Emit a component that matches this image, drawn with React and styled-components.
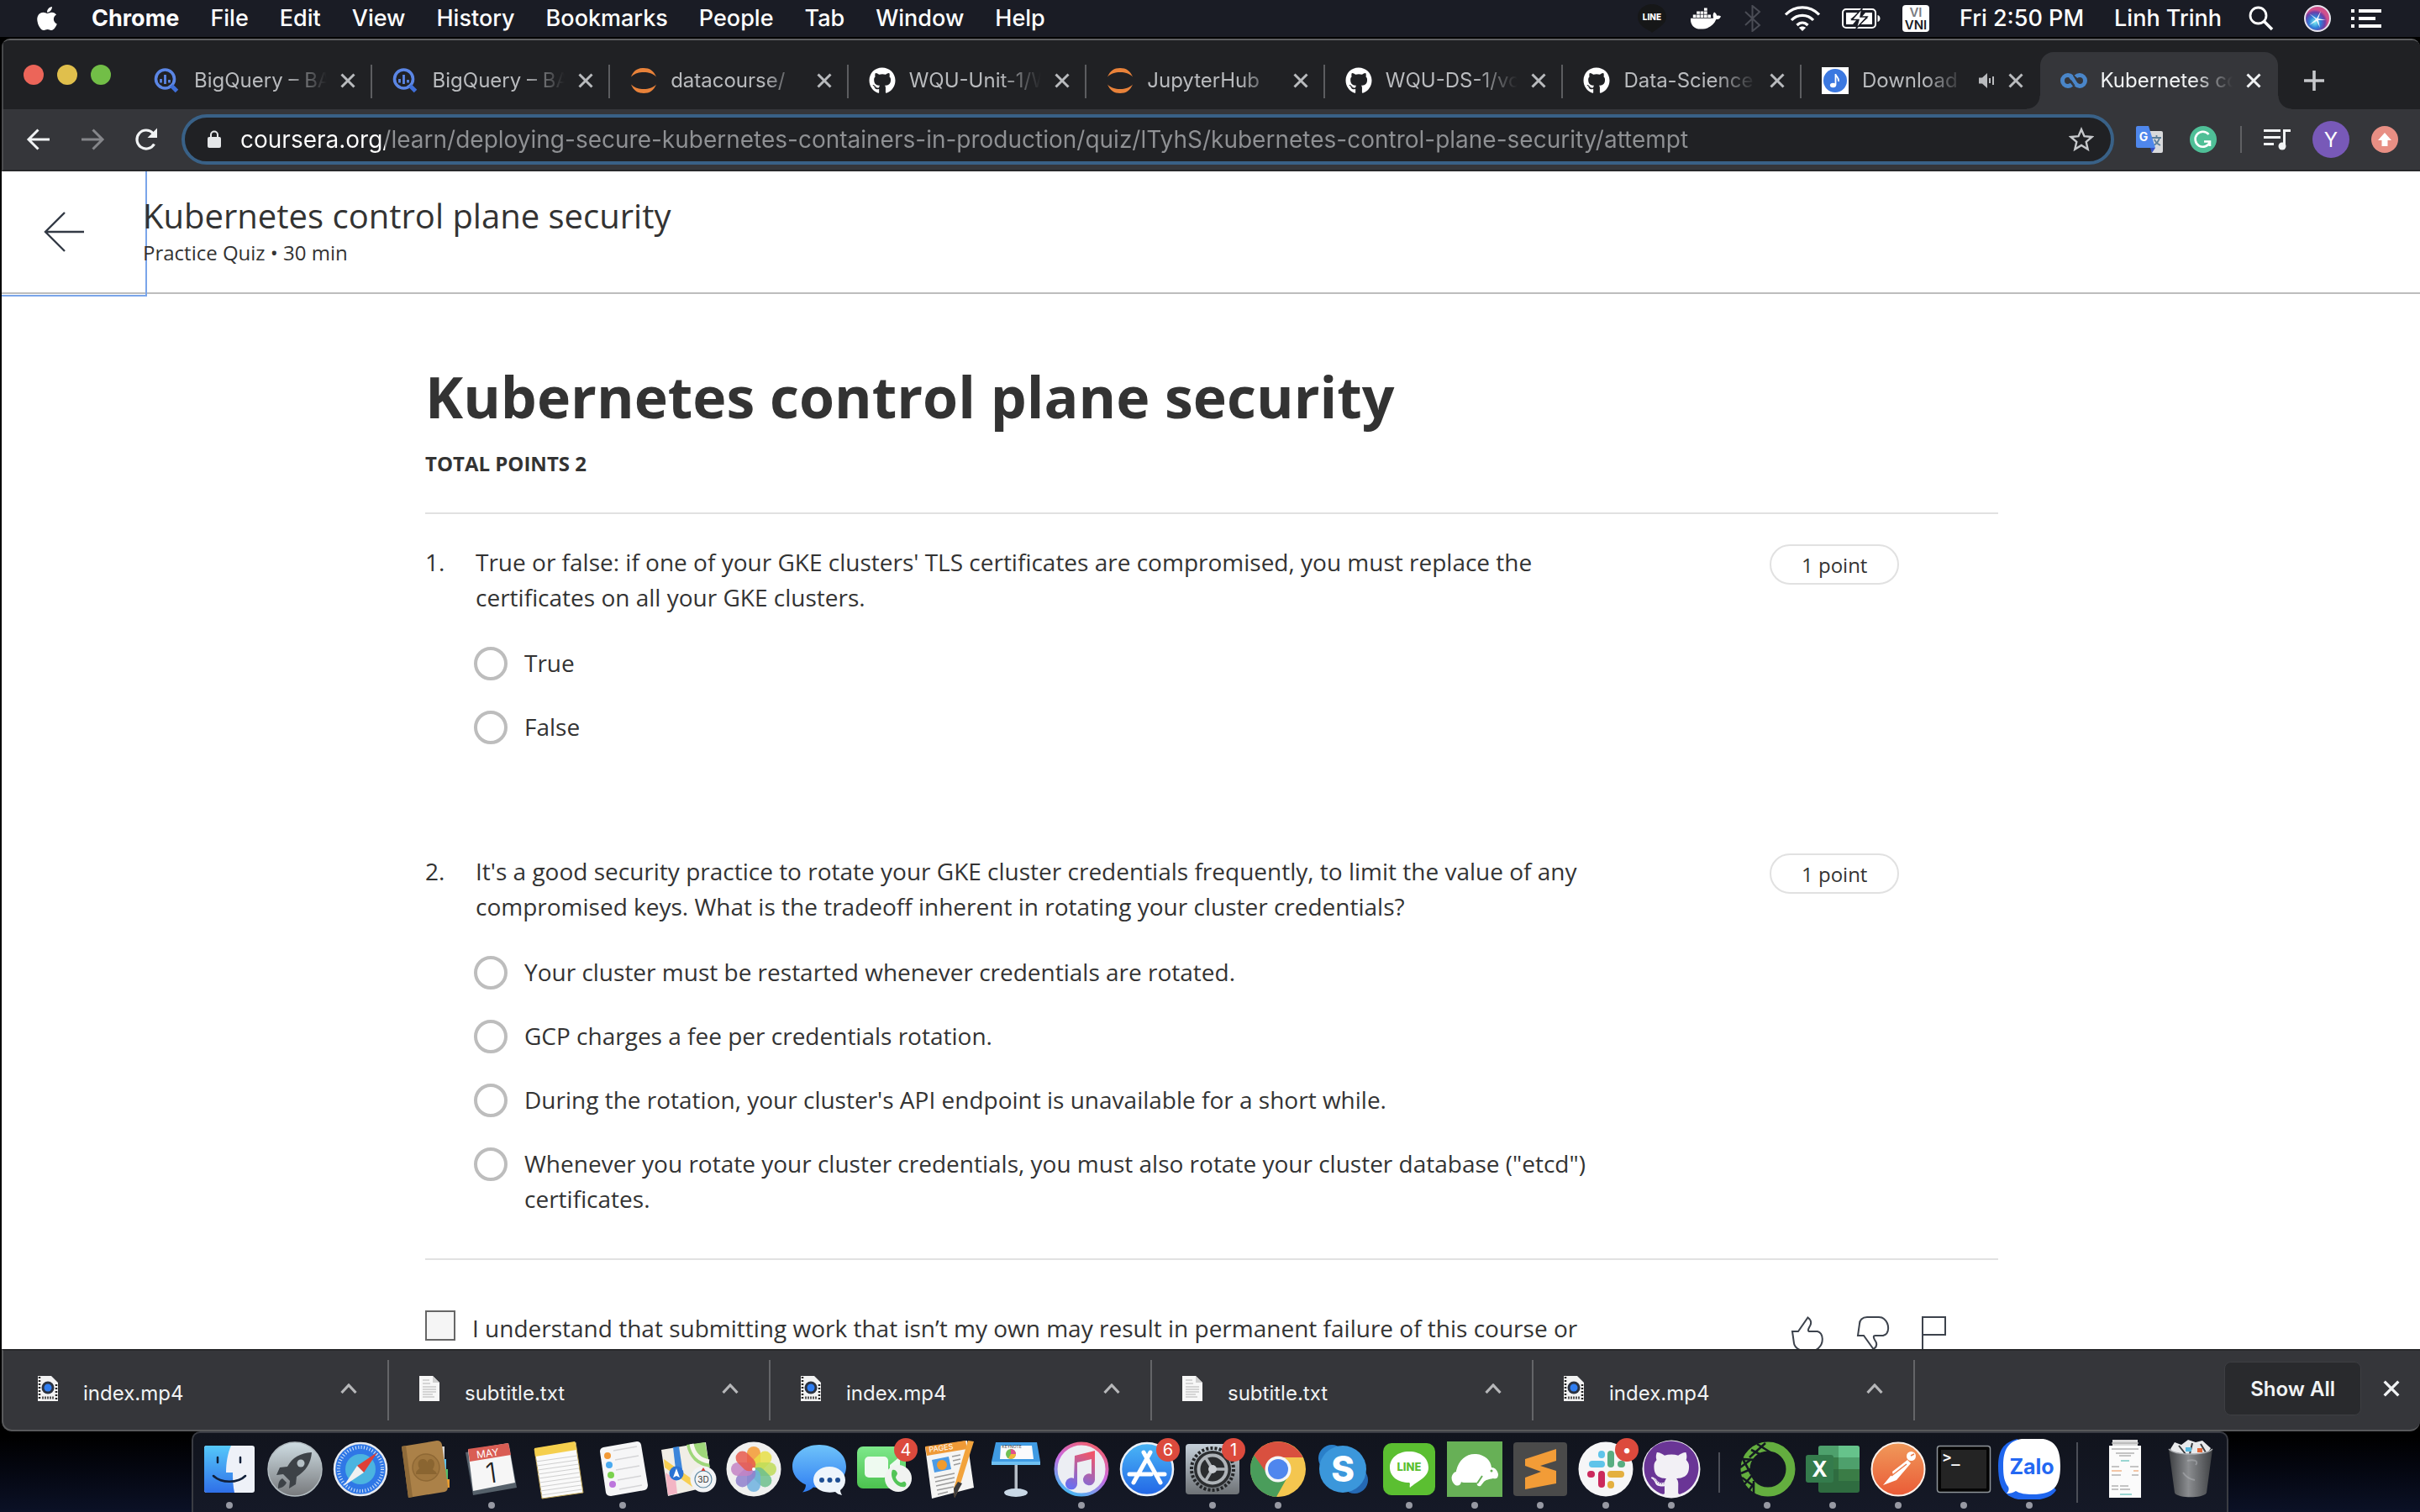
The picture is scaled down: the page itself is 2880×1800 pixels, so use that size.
import React from "react";
import styled, { createGlobalStyle, css } from "styled-components";
import { FaApple, FaDocker, FaGithub } from "react-icons/fa";

const UI = `Inter, Roboto, "Liberation Sans", sans-serif`;
const READING = `"Open Sans", "Noto Sans", sans-serif`;

const GlobalStyle = createGlobalStyle`
  *, *::before, *::after { box-sizing: border-box; }
  body { margin: 0; background: #05070f; overflow: hidden; }
  button { font: inherit; color: inherit; background: none; border: 0; padding: 0; margin: 0; cursor: pointer; }
  svg { display: block; flex: none; }
  h1, h2, p, ol, ul, li { margin: 0; padding: 0; list-style: none; }
`;

/* ---------- desktop ---------- */

const Desktop = styled.div`
  display: flex;
  flex-direction: column;
  height: 100vh;
  background: linear-gradient(#000 0 95%, #04060f 97%, #0b1126 100%);
  font-family: ${UI};
`;

const MenuBar = styled.header`
  display: flex;
  align-items: center;
  justify-content: space-between;
  height: 44px;
  flex: none;
  padding: 0 46px 0 40px;
  background: #1a1c25;
  color: #fff;
  font-size: 27px;
`;

const MenuGroup = styled.nav`
  display: flex;
  align-items: center;
  gap: 37px;
`;

const MenuButton = styled.button`
  font-weight: ${(p) => (p.$bold ? 700 : 500)};
  line-height: 44px;
  white-space: nowrap;
`;

const StatusGroup = styled.div`
  display: flex;
  align-items: center;
  gap: ${(p) => p.$gap}px;
`;

const InputSource = styled.span`
  display: grid;
  width: 32px;
  height: 32px;
  border-radius: 4px;
  background: #fff;
  color: #1a1c25;
  font-size: 15px;
  font-weight: 600;
  line-height: 15px;
  text-align: center;
  align-content: center;
`;

const Faded = styled.span`
  color: #7b7c82;
`;

/* ---------- browser window ---------- */

const Window = styled.main`
  display: flex;
  flex-direction: column;
  flex: 1;
  min-height: 0;
  margin: 2px 0 0 2px;
  border-top: 2px solid #5d5e60;
  border-radius: 10px 10px 12px 12px;
  overflow: hidden;
  background: #202124;
`;

const TabStrip = styled.div`
  display: flex;
  align-items: flex-end;
  height: 82px;
  flex: none;
  border-left: 2px solid #47484a;
  background: #202124;
`;

const TrafficLights = styled.div`
  display: flex;
  gap: 16px;
  padding: 0 27px 29px 24px;
`;

const Light = styled.button`
  width: 24px;
  height: 24px;
  border-radius: 50%;
  background: ${(p) => p.$color};
`;

const TabList = styled.div`
  display: flex;
  flex: 0 1 2552px;
  min-width: 0;
`;

const TabBox = styled.div`
  position: relative;
  display: flex;
  align-items: center;
  gap: 16px;
  flex: 1 1 0;
  min-width: 0;
  height: 68px;
  padding: 0 20px 0 24px;
  color: ${(p) => (p.$active ? "#f1f3f4" : "#b9bbbe")};
  ${(p) =>
    p.$active
      ? css`
          background: #35363a;
          border-radius: 16px 16px 0 0;
          &::before,
          &::after {
            content: "";
            position: absolute;
            bottom: 0;
            width: 16px;
            height: 16px;
          }
          &::before {
            right: 100%;
            background: radial-gradient(circle at 0 0, #202124 15px, #35363a 16px);
          }
          &::after {
            left: 100%;
            background: radial-gradient(circle at 100% 0, #202124 15px, #35363a 16px);
          }
        `
      : ""}
  ${(p) =>
    p.$divided
      ? css`
          background: linear-gradient(#5c5d60, #5c5d60) right 0 top 15px / 2px 40px no-repeat;
        `
      : ""}
`;

const TabTitle = styled.button`
  flex: 1;
  min-width: 0;
  overflow: hidden;
  white-space: nowrap;
  text-align: left;
  font-size: 24px;
  line-height: 32px;
  mask-image: linear-gradient(90deg, #000 calc(100% - 48px), transparent);
`;

const IconButton = styled.button`
  display: grid;
  place-items: center;
  flex: none;
  width: ${(p) => p.$w}px;
  height: ${(p) => p.$w}px;
`;

const NewTab = styled.button`
  display: grid;
  place-items: center;
  width: 86px;
  height: 68px;
  color: #c6c8cb;
`;

const Toolbar = styled.div`
  display: flex;
  align-items: center;
  height: 74px;
  flex: none;
  border-left: 2px solid #4b4c4f;
  border-bottom: 2px solid #28292b;
  background: #35363a;
  padding-right: 26px;
`;

const NavButtons = styled.div`
  display: flex;
  gap: 32px;
  padding: 0 26px;
`;

const Omnibox = styled.label`
  display: flex;
  align-items: center;
  flex: 1;
  height: 60px;
  padding: 0 20px 0 26px;
  border: 4px solid #396187;
  border-radius: 30px;
  background: #202124;
`;

const Address = styled.input`
  flex: 1;
  min-width: 0;
  height: 44px;
  margin-left: 22px;
  padding: 0;
  border: 0;
  outline: 0;
  font-family: ${UI};
  font-size: 28px;
  color: transparent;
  background: linear-gradient(90deg, #fff 172px, #8f9194 172px);
  -webkit-background-clip: text;
  background-clip: text;
`;

const Extensions = styled.div`
  display: flex;
  align-items: center;
  gap: ${(p) => p.$gap}px;
  padding-left: ${(p) => p.$lead}px;
`;

const Rule = styled.span`
  width: 2px;
  height: 32px;
  background: #5f6063;
`;

const Avatar = styled.button`
  width: 44px;
  height: 44px;
  border-radius: 50%;
  background: #7859b8;
  color: #fff;
  font-size: 24px;
`;

/* ---------- page ---------- */

const Viewport = styled.div`
  flex: 1;
  min-height: 0;
  overflow: hidden;
  background: #fff;
  color: #333;
  font-family: ${READING};
`;

const PageHeader = styled.div`
  display: flex;
  height: 146px;
  align-items: center;
  border-bottom: 2px solid #bdbdbd;
`;

const BackButton = styled.button`
  display: grid;
  place-items: center start;
  padding-left: 50px;
  width: 168px;
  height: 144px;
  outline: 2px solid #7aa5ea;
  outline-offset: 3px;
`;

const HeaderText = styled.div`
  padding-bottom: 2px;
`;

const HeaderTitle = styled.p`
  font-size: 40px;
  line-height: 52px;
`;

const HeaderMeta = styled.p`
  font-size: 24px;
  line-height: 36px;
`;

const PageBody = styled.div`
  padding-left: 2px;
`;

const Quiz = styled.article`
  max-width: 1872px;
  margin: 0 auto;
  padding-top: 78px;
`;

const Title = styled.h1`
  font-size: 68px;
  font-weight: 700;
  line-height: 88px;
`;

const Points = styled.p`
  margin-top: 18px;
  padding-bottom: 40px;
  border-bottom: 2px solid #e1e1e1;
  font-size: 24px;
  font-weight: 700;
  line-height: 36px;
`;

const Questions = styled.ol`
  display: flex;
  flex-direction: column;
  gap: 130px;
  padding: 36px 0 50px;
  border-bottom: 2px solid #e1e1e1;
  font-size: 28px;
  line-height: 42px;
`;

const Question = styled.li`
  display: grid;
  grid-template-columns: 60px minmax(0, 1fr) 272px;
  align-items: start;
`;

const QuestionBody = styled.fieldset`
  border: 0;
  margin: 0;
  padding: 0 200px 0 0;
  min-width: 0;
`;

const Prompt = styled.legend`
  padding: 0;
  margin-bottom: 36px;
`;

const Options = styled.div`
  display: flex;
  flex-direction: column;
  gap: 34px;
  margin-left: -2px;
`;

const Option = styled.label`
  display: flex;
  align-items: flex-start;
  gap: 20px;
`;

const Radio = styled.input`
  appearance: none;
  flex: none;
  width: 40px;
  height: 40px;
  margin: 2px 0 0;
  border: 4px solid #bdbdbd;
  border-radius: 50%;
  background: #fff;
  &:checked {
    background: #2a73cc;
  }
`;

const Pill = styled.span`
  justify-self: start;
  padding: 2px 36px 0;
  border: 2px solid #e1e1e1;
  border-radius: 24px;
  font-size: 24px;
  line-height: 42px;
`;

const Honor = styled.div`
  display: grid;
  grid-template-columns: minmax(0, 1fr) 247px;
  padding-top: 60px;
  font-size: 28px;
  line-height: 42px;
`;

const Agreement = styled.label`
  display: flex;
  gap: 20px;
`;

const Checkbox = styled.input`
  appearance: none;
  flex: none;
  width: 36px;
  height: 36px;
  margin: 0;
  border: 2px solid #666;
  background: #f5f5f5;
  &:checked {
    background: #2a73cc;
  }
`;

const Feedback = styled.div`
  display: flex;
  gap: 38px;
  padding-top: 7px;
  color: #3d434d;
`;

/* ---------- downloads shelf ---------- */

const Shelf = styled.footer`
  display: flex;
  align-items: center;
  height: 98px;
  flex: none;
  padding: 0 24px 0 5px;
  border: 2px solid #58595b;
  border-top-color: #28292b;
  border-right: 0;
  border-radius: 0 0 12px 12px;
  background: #35363a;
  color: #f1f3f4;
  font-size: 24px;
`;

const Download = styled.div`
  display: flex;
  align-items: center;
  flex: 0 1 454px;
  height: 72px;
  padding: 0 36px 4px 36px;
  border-right: 2px solid #646568;
`;

const FileName = styled.button`
  flex: 1;
  min-width: 0;
  padding: 12px 0 0 30px;
  text-align: left;
  line-height: 32px;
`;

const ShelfActions = styled.div`
  display: flex;
  align-items: center;
  gap: 26px;
  margin-left: auto;
  padding-bottom: 4px;
`;

const ShowAll = styled.button`
  height: 64px;
  padding: 0 30px;
  border: 1px solid #3e3f43;
  border-radius: 8px;
  background: #292a2d;
  font-weight: 600;
`;

/* ---------- dock ---------- */

const Dock = styled.nav`
  display: flex;
  align-self: center;
  height: 96px;
  flex: none;
  padding: 0 4px;
  border: 2px solid #3a3c43;
  border-bottom: 0;
  border-radius: 10px 10px 0 0;
  background: linear-gradient(#11141d, #151927);
`;

const Slot = styled.button`
  position: relative;
  display: flex;
  flex-direction: column;
  align-items: center;
  gap: 3px;
  width: 78px;
  padding-top: 7px;
`;

const Running = styled.span`
  width: 8px;
  height: 8px;
  border-radius: 50%;
  background: #9799a3;
`;

const Badge = styled.span`
  position: absolute;
  top: 6px;
  right: 0;
  width: 28px;
  height: 28px;
  border-radius: 50%;
  background: #dc4a3d;
  color: #fff;
  font-size: 20px;
  line-height: 28px;
`;

const DockRule = styled.span`
  width: 2px;
  height: ${(p) => p.$h}px;
  margin: 0 17px;
  align-self: center;
  background: #4b4e57;
`;

/* ---------- small drawings ---------- */

const Svg = ({ w, h = w, box, children, ...rest }) => (
  <svg width={w} height={h} viewBox={box || `0 0 ${w} ${h}`} fill="none" aria-hidden="true" {...rest}>
    {children}
  </svg>
);

const Cross = ({ size = 18, stroke = 3 }) => (
  <Svg w={size} box="0 0 18 18" stroke="currentColor" strokeWidth={stroke}>
    <path d="M1.5 1.5l15 15M16.5 1.5l-15 15" />
  </Svg>
);

const BigQueryIcon = () => (
  <Svg w={32}>
    <circle cx="13.500" cy="14" r="11" stroke="#5b86e5" strokeWidth="3.600" />
    <path d="M21 22l6.500 6.500" stroke="#3f6fd8" strokeWidth="5" />
    <path d="M8.500 14v4.500M13.500 9v11M18.500 15v3.500" stroke="#5b86e5" strokeWidth="2.800" />
  </Svg>
);

const JupyterIcon = () => (
  <Svg w={32}>
    <path d="M1 11.500C4 4 9 1 16 1s12 3 15 10.500C27 7.500 22 6 16 6S5 7.500 1 11.500z" fill="#e8823a" />
    <path d="M1 20.500C4 28 9 31 16 31s12-3 15-10.500C27 24.500 22 26 16 26S5 24.500 1 20.500z" fill="#e8823a" />
  </Svg>
);

const GithubIcon = () => <FaGithub size={32} color="#fff" />;

const MusicIcon = () => (
  <Svg w={32}>
    <path d="M0 0h32v32H0z" fill="#fff" />
    <circle cx="16" cy="16" r="14" fill="#3b78e0" />
    <ellipse cx="13.500" cy="21.500" rx="3.600" ry="2.800" fill="#fff" />
    <path d="M16.500 21.500V8c.5 4 4.500 4 3.500 9" stroke="#fff" strokeWidth="1.800" />
  </Svg>
);

const CourseraIcon = () => (
  <Svg w={32} stroke="#4a86c9" strokeWidth="5">
    <path d="M13.500 20.800C12 22 10.500 22.500 9 22.500a6.500 6.500 0 010-13c2 0 3.500.8 4.600 2" />
    <path d="M18.400 11.400c1.100-1.200 2.700-1.900 4.600-1.900a6.500 6.500 0 010 13c-6.500 0-7-9.500-11.500-12" />
    <path d="M12.500 15.500l4.500 6.500" stroke="#35363a" strokeWidth="1.200" />
  </Svg>
);

const Speaker = () => (
  <Svg w={20}>
    <path d="M1 6.500h4L11 1v18l-6-5.500H1z" fill="currentColor" />
    <path d="M14 7v6M18 5v10" stroke="currentColor" strokeWidth="2" />
  </Svg>
);

const LineStatus = () => (
  <Svg w={36}>
    <path d="M18 1c10 0 17 7 17 15 0 9-8 12-17 19-1-3-17-6-17-19C1 8 8 1 18 1z" fill="#161718" />
    <text x="18" y="20" fontFamily={UI} fontWeight="800" fontSize="10" textAnchor="middle" fill="#fff">
      LINE
    </text>
  </Svg>
);

const Bluetooth = () => (
  <Svg w={20} h={32} stroke="#4a4c55" strokeWidth="2">
    <path d="M1 8l17 16-8.500 7V1L18 8 1 24" />
  </Svg>
);

const Wifi = () => (
  <Svg w={42} h={30} stroke="#fff" strokeWidth="3.200">
    <path d="M1 10.500C12-1 30-1 41 10.500M8 17c7-7.500 19-7.500 26 0M14.500 23c4-4 9-4 13 0" />
    <path d="M21 30l-4-4c2-2 6-2 8 0z" fill="#fff" stroke="none" />
  </Svg>
);

const Battery = () => (
  <Svg w={46} h={26}>
    <rect x="1" y="2" width="39" height="22" rx="4" stroke="#fff" strokeWidth="2" />
    <path d="M42.500 9c4 1 4 7 0 8z" fill="#fff" />
    <path d="M5 6h15L10 14h8l-5 6H5zM36 20H22l9-8h-8l5-6h8z" fill="#fff" />
    <path d="M24 1L12 14.500h8L17 25l13-14h-8z" fill="#fff" stroke="#1a1c25" strokeWidth="1.500" />
  </Svg>
);

const Spotlight = () => (
  <Svg w={30} stroke="#fff" strokeWidth="2.800">
    <circle cx="11.500" cy="11.500" r="9.500" />
    <path d="M18.500 18.500L28 28" strokeWidth="3.500" />
  </Svg>
);

const Siri = () => (
  <Svg w={32}>
    <defs>
      <radialGradient id="siri" cx="40%" cy="65%">
        <stop offset="0" stopColor="#7df0f0" />
        <stop offset=".45" stopColor="#2f7fd8" />
        <stop offset=".8" stopColor="#6b3fa8" />
        <stop offset="1" stopColor="#d0508c" />
      </radialGradient>
    </defs>
    <circle cx="16" cy="16" r="15" fill="url(#siri)" stroke="#e6e4ee" strokeWidth="2" />
    <path d="M6 10l9 6 5-9-3 9 9 2-9 0 2 9-4-8-9 5 8-7z" fill="#fff" opacity=".9" />
  </Svg>
);

const ListIcon = () => (
  <Svg w={36} h={22} stroke="#fff" strokeWidth="4">
    <path d="M0 2h4M9 2h27M0 11h4M9 11h20M0 20h4M9 20h27" />
  </Svg>
);

const Arrow = ({ flip, color }) => (
  <Svg w={32} stroke={color} strokeWidth="3">
    <g transform={flip ? "matrix(-1 0 0 1 32 0)" : undefined}>
      <path d="M29 16H4M15.500 4.500L4 16l11.500 11.500" />
    </g>
  </Svg>
);

const Reload = () => (
  <Svg w={32}>
    <path d="M25.500 21.500a11 11 0 11-1.500-13" stroke="#f1f3f4" strokeWidth="3.200" />
    <path d="M29 2.500V14H17.500z" fill="#f1f3f4" />
  </Svg>
);

const Lock = () => (
  <Svg w={18} h={22}>
    <rect x="1" y="8" width="16" height="13" rx="2" fill="#e4e6e8" />
    <path d="M5 9V5.500a4 4 0 018 0V9" stroke="#e4e6e8" strokeWidth="2" />
  </Svg>
);

const Star = () => (
  <Svg w={30}>
    <path
      d="M15 3l3.500 8.200 9 .8-6.800 5.900 2 8.800L15 22l-7.700 4.700 2-8.800L2.500 12l9-.8z"
      stroke="#c6c8cb"
      strokeWidth="2.400"
    />
  </Svg>
);

const Translate = () => (
  <Svg w={32}>
    <path d="M14 6h16a2 2 0 012 2v22a2 2 0 01-2 2H19z" fill="#d9dadc" />
    <path d="M19 14h11M24.500 11v3M21 23c4-2 6-5 7-9M22 16c1 3 3 5 7 7" stroke="#5d7f99" strokeWidth="1.800" />
    <path d="M2 0h13l8 26H2a2 2 0 01-2-2V2a2 2 0 012-2z" fill="#4f87ec" />
    <path d="M17 26h6l-4 6z" fill="#3550c4" />
    <text x="9" y="18" fontFamily={UI} fontWeight="700" fontSize="14" textAnchor="middle" fill="#fff">
      G
    </text>
  </Svg>
);

const Grammarly = () => (
  <Svg w={32}>
    <circle cx="16" cy="16" r="16" fill="#4fbf97" />
    <path d="M22.500 10a9 9 0 101.500 9M17 18.500h7V24" stroke="#fff" strokeWidth="2.600" />
  </Svg>
);

const Playlist = () => (
  <Svg w={32} h={28} stroke="#f1f3f4" strokeWidth="3">
    <path d="M0 3.500h20M0 11.500h20M0 19.500h12M24.500 22V3.500H32" />
    <circle cx="22" cy="22" r="4.500" fill="#f1f3f4" stroke="none" />
  </Svg>
);

const Update = () => (
  <Svg w={32}>
    <circle cx="16" cy="16" r="16" fill="#e88f84" />
    <path d="M16 8l8 9h-4.500v7h-7v-7H8z" fill="#fff" />
  </Svg>
);

const BackArrow = () => (
  <Svg w={48} stroke="#333a45" strokeWidth="2.400">
    <path d="M48 24H2M25 1L2 24l23 23" />
  </Svg>
);

const ThumbUp = () => (
  <Svg w={40} h={42} stroke="currentColor" strokeWidth="2">
    <path d="M2 18h7L20.500 1.500C24 4 25 7 23.500 10.500C21 15 19.500 18 23 18h9c7 2 8 14 1 20-2 2-4 2.500-6 2.500H12C6 38 4 34 4 32z" />
  </Svg>
);

const ThumbDown = () => (
  <Svg w={40} h={42} stroke="currentColor" strokeWidth="2">
    <path d="M2 23h7l11.500 16C24 37 25 34 23.500 30.500C20 25 20 23 23 23h9c8-2 8-14 1-20-2-2-4-2-6-2H13C7 1 4 5 4 9z" />
  </Svg>
);

const Flag = () => (
  <Svg w={30} h={42} stroke="currentColor" strokeWidth="2">
    <path d="M1 42V1h27v21H1" />
  </Svg>
);

const MovieFile = () => (
  <Svg w={24} h={30}>
    <path d="M0 0h16l8 8v22H0z" fill="#f2f2f2" />
    <path d="M2 1v28M22 10v19" stroke="#222" strokeWidth="2.500" strokeDasharray="2 2" />
    <circle cx="12" cy="14" r="7.500" fill="#2b3240" />
    <circle cx="12" cy="14" r="4.500" fill="#2f7df0" />
    <path d="M5 26h14" stroke="#555" strokeWidth="3" strokeDasharray="2 1" />
  </Svg>
);

const TextFile = () => (
  <Svg w={24} h={30}>
    <path d="M0 0h16l8 8v22H0z" fill="#f7f7f7" />
    <path d="M16 0v8h8z" fill="#cfcfcf" />
    <path d="M4 5h8M4 9h9M4 13h16M4 16h16M4 19h16M4 22h12M4 25h14" stroke="#b4b4b4" strokeWidth="1.200" />
  </Svg>
);

const Chevron = () => (
  <Svg w={20} h={12} stroke="#b6b7b9" strokeWidth="3.200">
    <path d="M1.500 11L10 2l8.500 9" />
  </Svg>
);

/* ---------- dock drawings, each on a 72 x 72 board ---------- */

const Board = ({ children }) => <Svg w={72}>{children}</Svg>;

const Grad = ({ id, from, to }) => (
  <linearGradient id={id} x1="0" y1="0" x2="0" y2="1">
    <stop offset="0" stopColor={from} />
    <stop offset="1" stopColor={to} />
  </linearGradient>
);

const Finder = () => (
  <Board>
    <Grad id="finder" from="#55c8fa" to="#2f6fe8" />
    <rect x="6" y="8" width="60" height="56" rx="3" fill="#eef1f8" />
    <path d="M9 8h29c-4 9-6 20-6 32h8c0 9 .5 17 2 24H9a3 3 0 01-3-3V11a3 3 0 013-3z" fill="url(#finder)" />
    <path d="M22 22v6M49 22v6M17 44c9 9 29 9 38 0" stroke="#11203a" strokeWidth="2.500" strokeLinecap="round" />
  </Board>
);

const Launchpad = () => (
  <Board>
    <Grad id="lp" from="#cfdde3" to="#77797c" />
    <circle cx="36" cy="36" r="32" fill="url(#lp)" stroke="#b3bcc1" strokeWidth="1.500" />
    <path d="M56 16C42 17 33 22 27 33l-9 1-4 9 8-1 8 8-1 9 8-5 1-9c11-7 17-16 18-29z" fill="#3d4247" />
    <circle cx="43" cy="29" r="4.500" fill="#b5c0c5" />
    <path d="M21 47c-5 3-5 8-5 12 5-1 8-3 10-7z" fill="#3d4247" />
  </Board>
);

const Safari = () => (
  <Board>
    <circle cx="36" cy="36" r="31" fill="#2f77e6" stroke="#e8eaee" strokeWidth="2.500" />
    <circle cx="36" cy="36" r="18" fill="#4bb4e0" />
    <circle cx="36" cy="36" r="26" stroke="#dbe9fb" strokeWidth="4" strokeDasharray="1 2.400" />
    <path d="M56 16L32 32l8 8z" fill="#e04036" />
    <path d="M16 56l16-24 8 8z" fill="#f1f1f1" />
  </Board>
);

const Contacts = () => (
  <Board>
    <path d="M52 9h6v16h-6z" fill="#d6d6d6" />
    <path d="M53 24h7v13h-7z" fill="#5cc0ea" />
    <path d="M55 36h7v13h-7z" fill="#55c06c" />
    <path d="M57 48h7v10h-8z" fill="#e79b2f" />
    <path d="M7 9l42-7q5 0 6 5l7 50q0 5-4 6L15 70z" fill="#ab8148" />
    <path d="M7 9l5-1 8 61-5 1z" fill="#8e6a39" />
    <circle cx="36" cy="34" r="16" fill="#a0773f" stroke="#8e6835" strokeWidth="1.500" />
    <path d="M24 42c0-5 3-5 4-7-3-5-1-11 4-11 6 0 7 6 4 11 2-4 0-10 5-11 6 0 6 8 3 12 1 2 4 2 5 6z" fill="#8a6531" />
  </Board>
);

const Calendar = () => (
  <Board>
    <path d="M5 16l52-8 9 50-52 9z" fill="#56616b" />
    <path d="M8 13l48-8 8 47-50 10z" fill="#f6f6f6" />
    <path d="M8 12L56 5l3 14-49 8z" fill="#d95d54" />
    <g transform="rotate(-8 36 36)" fontFamily={UI} textAnchor="middle">
      <text x="34" y="21" fontSize="12" fill="#fff">
        MAY
      </text>
      <text x="35" y="52" fontSize="33" fontWeight="300" fill="#222">
        1
      </text>
    </g>
  </Board>
);

const Notes = () => (
  <Board>
    <path d="M9 12l49-8 9 60-49 7z" fill="#fafafa" stroke="#b99d4c" strokeWidth="1" />
    <path d="M9 11l48-8 2 10-49 8z" fill="#f5cf4d" />
    <path
      d="M11 27l49-7M12 32l49-7M13 37l49-7M13 42l49-7M14 47l49-7M15 52l49-7M16 57l48-7M16 62l49-7M17 67l49-7"
      stroke="#cfcfcf"
      strokeWidth="1"
    />
  </Board>
);

const Reminders = () => (
  <Board>
    <path d="M13 10l40-7q4 0 5 4l8 48q0 5-4 6l-40 7q-5 0-6-4L9 15q0-4 4-5z" fill="#f6f6f7" />
    <path d="M25 14l28-5M27 25l28-5M28 37l28-5M30 49l28-5M32 60l27-5" stroke="#d5d5d7" strokeWidth="1.300" />
    <circle cx="18" cy="20" r="4" fill="#f29a37" />
    <circle cx="20" cy="31" r="4" fill="#4aaaf0" />
    <circle cx="22" cy="43" r="4" fill="#7bd24e" />
    <circle cx="24" cy="54" r="4" fill="#bd76dc" />
  </Board>
);

const Maps = () => (
  <Board>
    <path d="M4 13l53-9 7 52-52 12z" fill="#f1eee6" />
    <path d="M34 7l22-3 6 30C46 32 37 22 34 7z" fill="#9fd77a" />
    <path d="M40 6c2 11 9 19 21 21" stroke="#f7f5ee" strokeWidth="5" />
    <path d="M7 24l34 24v9L8 34z" fill="#f8cf52" />
    <path d="M9 40l12 8 2 17-11 2z" fill="#f3b5c4" />
    <path d="M18 10l7-1 4 27h-8z" fill="#3c86da" />
    <circle cx="22" cy="41" r="8.500" fill="#2b73d4" />
    <path d="M22 35l4 11-4-2-4 2z" fill="#fff" />
    <circle cx="54" cy="48" r="15.500" fill="#f2f3f5" />
    <circle cx="54" cy="48" r="10" stroke="#5e8aa3" strokeWidth="1.200" />
    <path d="M54 34l2.500 4h-5z" fill="#d63a2f" />
    <text x="54" y="51.500" fontFamily={UI} fontSize="10" textAnchor="middle" fill="#333">
      3D
    </text>
  </Board>
);

const petals = ["#f59a31", "#e8df46", "#bfdc58", "#6dbf8c", "#6fb1df", "#8f80cc", "#c383c4", "#e85a4c"];

const Photos = () => (
  <Board>
    <circle cx="36" cy="36" r="32.500" fill="#f0f0ef" />
    {petals.map((c, i) => (
      <rect key={c} x="28" y="9" width="16" height="27" rx="8" fill={c} opacity=".85" transform={`rotate(${i * 45} 36 36)`} />
    ))}
    <circle cx="36" cy="36" r="2" fill="#fff" />
  </Board>
);

const Messages = () => (
  <Board>
    <Grad id="msg" from="#6fc3fa" to="#2f7df2" />
    <path d="M36 7c18 0 32 11 32 26S54 58 36 58c-2 0-5 0-7-.5-3 3-7 5-13 6 3-3 4-6 4-9C10 50 4 42 4 33 4 18 18 7 36 7z" fill="url(#msg)" />
    <path d="M48 33c11 0 19 7 19 16 0 5-2 9-6 12 0 2 1 4 2 6-4-1-6-2-8-4-16 3-26-5-26-14 0-9 8-16 19-16z" fill="#eef5fc" />
    <g fill="#1f4f94">
      <circle cx="39" cy="49" r="3" />
      <circle cx="48.500" cy="49" r="3" />
      <circle cx="58" cy="49" r="3" />
    </g>
  </Board>
);

const FaceTime = () => (
  <Board>
    <Grad id="ft" from="#7de88b" to="#4cc24f" />
    <rect x="3" y="9" width="58" height="50" rx="7" fill="url(#ft)" />
    <rect x="12" y="21" width="28" height="25" rx="5" fill="#eefaf0" />
    <path d="M42 31l12-10v25l-12-9z" fill="#eefaf0" />
    <circle cx="52" cy="47" r="16" fill="#f1f3f1" />
    <path d="M45 37c3-1 5 1 6 4 0 2-2 3-2 5 1 3 3 5 6 6 2 0 3-2 5-1 2 2 2 4 0 6-10 2-19-11-15-20z" fill="#53c557" />
  </Board>
);

const Pages = () => (
  <Board>
    <path d="M6 10l50-8 8 56-50 13z" fill="#f5f5f4" />
    <path d="M6 9L54 2l2 10L8 20z" fill="#ef9a37" />
    <text x="11" y="16" fontFamily={UI} fontSize="9" fill="#fff" transform="rotate(-8 11 16)">
      PAGES
    </text>
    <path d="M14 25l20-4 3 15-20 4z" fill="#4c9be6" />
    <circle cx="26" cy="31" r="6" fill="#f09b2e" />
    <path d="M38 21l10-2M39 26l9-2M40 31l8-2M17 46l24-5M18 51l23-5M19 56l22-5M20 61l20-4M21 66l12-3" stroke="#9b9b9b" strokeWidth="1.300" />
    <path d="M57 2l7 1-18 57-5 10-1-11z" fill="#f2a33c" />
    <path d="M45 51l5 2-4 7-5 10-1-11z" fill="#3b3b3d" />
  </Board>
);

const Keynote = () => (
  <Board>
    <path d="M12 4h49l4 23H7z" fill="#3f9be3" />
    <path d="M7 27h58v4H7z" fill="#6fc0f2" />
    <path d="M18 8h37l2 16H17z" fill="#fafbfc" />
    <circle cx="30" cy="18" r="6" fill="#6fbf53" />
    <path d="M30 18v-6a6 6 0 016 6z" fill="#e34f8d" />
    <path d="M30 18h6a6 6 0 01-9 5z" fill="#f3b53c" />
    <text x="31" y="11" fontFamily={UI} fontSize="5" textAnchor="middle" fill="#444">
      KEYNOTE
    </text>
    <path d="M34.500 31h3.500v32h-3.500z" fill="#b5bdc6" />
    <ellipse cx="36" cy="64" rx="14" ry="5" fill="#c9d8e6" />
  </Board>
);

const ITunes = () => (
  <Board>
    <linearGradient id="it" x1=".8" y1="0" x2=".3" y2="1">
      <stop offset="0" stopColor="#f2606a" />
      <stop offset=".5" stopColor="#c968e0" />
      <stop offset="1" stopColor="#48b8f4" />
    </linearGradient>
    <circle cx="36" cy="36" r="30.500" fill="#eceef3" stroke="url(#it)" strokeWidth="4" />
    <linearGradient id="itn" x1=".7" y1="0" x2=".3" y2="1">
      <stop offset="0" stopColor="#f0566a" />
      <stop offset="1" stopColor="#6a6ff0" />
    </linearGradient>
    <path d="M28 20l24-6v34a7 7 0 11-4-6V24l-17 4v25a7 7 0 11-4-6z" fill="url(#itn)" />
  </Board>
);

const AppStore = () => (
  <Board>
    <Grad id="as" from="#4ab6f6" to="#2266e6" />
    <circle cx="36" cy="36" r="31" fill="url(#as)" stroke="#edf1f6" strokeWidth="2.500" />
    <path d="M40 16L20 52M32 16l20 36M15 42h26M49 42h8" stroke="#fff" strokeWidth="5" strokeLinecap="round" />
  </Board>
);

const Settings = () => (
  <Board>
    <Grad id="sp" from="#c5d0d9" to="#6e7276" />
    <rect x="4" y="6" width="64" height="60" rx="4" fill="url(#sp)" />
    <circle cx="36" cy="36" r="25" stroke="#232527" strokeWidth="4" strokeDasharray="3 2.200" />
    <circle cx="36" cy="36" r="22" fill="#2b2d2f" />
    <circle cx="36" cy="36" r="16.500" stroke="#aeb3b7" strokeWidth="4" />
    <path d="M36 36h17M36 36l-9-15M36 36l-9 15" stroke="#aeb3b7" strokeWidth="3.500" />
    <circle cx="36" cy="36" r="5" fill="#c8ccd0" />
  </Board>
);

const Chrome = () => (
  <Board>
    <circle cx="36" cy="36" r="33" fill="#f4c64f" />
    <path d="M36 22h29.500A33 33 0 007.400 19.500L22 43z" fill="#d9503f" />
    <path d="M7.400 19.500A33 33 0 0034 69l14-25-24-1z" fill="#4a9d5b" />
    <circle cx="36" cy="36" r="15.500" fill="#f5f6f7" />
    <circle cx="36" cy="36" r="12" fill="#4f86ee" />
  </Board>
);

const Skype = () => (
  <Board>
    <circle cx="22" cy="23" r="16" fill="#2a7fc9" />
    <circle cx="49" cy="49" r="16" fill="#2569b4" />
    <circle cx="35" cy="36" r="28" fill="#3b97db" />
    <text x="35" y="51" fontFamily={UI} fontWeight="800" fontSize="42" textAnchor="middle" fill="#fff">
      S
    </text>
  </Board>
);

const Line = () => (
  <Board>
    <rect x="5" y="5" width="62" height="62" rx="10" fill="#5bbf31" />
    <path d="M36 15c14 0 23 8 23 19 0 12-13 16-22 24-1-3 1-5-1-6-13 0-23-7-23-18s9-19 23-19z" fill="#fff" />
    <text x="36" y="38" fontFamily={UI} fontWeight="800" fontSize="13" textAnchor="middle" fill="#5bbf31">
      LINE
    </text>
  </Board>
);

const Tortoise = () => (
  <Board>
    <path d="M3 3h66v66H3z" fill="#67b056" />
    <path
      d="M14 38C17 24 27 17 38 18c10 1 17 7 18 16 4 0 7 3 8 8 0 5-3 6-6 5-6 1-9 2-11 4l-4 5c-3 1-5-1-4-4H23c-2 0-3-1-3-1-1 5-4 5-7 4-4-3-6-9-3-13 1-2 3-3 4-3z"
      fill="#fff"
    />
    <path d="M45 44l-6 9" stroke="#67b056" strokeWidth="2" />
    <circle cx="56" cy="38" r="1.500" fill="#67b056" />
  </Board>
);

const Sublime = () => (
  <Board>
    <rect x="4" y="4" width="64" height="64" rx="4" fill="#4a4a4a" />
    <path d="M18 24l37-12v14L36 32l19 6v15L18 60V46l19-7-19-7z" fill="#f29c37" />
  </Board>
);

const Slack = () => (
  <Board>
    <circle cx="36" cy="36" r="32.500" fill="#f6f6f7" />
    <g strokeWidth="8" strokeLinecap="round">
      <path d="M20 30h11" stroke="#5fc4ea" />
      <path d="M31 18v1" stroke="#5fc4ea" />
      <path d="M42 18v12" stroke="#59ae82" />
      <path d="M54 30h1" stroke="#59ae82" />
      <path d="M42 42h12" stroke="#e4b03f" />
      <path d="M42 54v1" stroke="#e4b03f" />
      <path d="M31 42v12" stroke="#cb2a5d" />
      <path d="M18 42h1" stroke="#cb2a5d" />
    </g>
  </Board>
);

const GithubApp = () => (
  <Board>
    <circle cx="36" cy="36" r="34.500" fill="#f2f0f5" />
    <FaGithub x="2.500" y="1.500" size={67} color="#6a3596" />
  </Board>
);

const Anaconda = () => (
  <Board>
    <circle cx="37" cy="36" r="27" stroke="#64ae3f" strokeWidth="11" />
    <path
      d="M34 5L15 22M24 6l16 10M17 13l12 6M8 24l14 1M4 34l12-9M6 22l11 20M5 41l14-6M6 46l14 10M9 54l11-13M14 62l6-9M20 66V50"
      stroke="#131722"
      strokeWidth="2.600"
    />
  </Board>
);

const Excel = () => (
  <Board>
    <rect x="19" y="8" width="49" height="56" rx="3" fill="#2f6c40" />
    <path d="M22 8h21v14H19V11a3 3 0 013-3z" fill="#4ea06c" />
    <path d="M43 8h22a3 3 0 013 3v11H43z" fill="#66c38b" />
    <path d="M19 22h24v14H19z" fill="#377d48" />
    <path d="M43 22h25v14H43z" fill="#4ea06c" />
    <path d="M43 36h25v14H43z" fill="#3a7c46" />
    <rect x="4" y="19" width="33" height="33" rx="3" fill="#347b4c" />
    <text x="20.500" y="45" fontFamily={UI} fontWeight="700" fontSize="25" textAnchor="middle" fill="#fff">
      X
    </text>
  </Board>
);

const Postman = () => (
  <Board>
    <Grad id="pm" from="#f0995a" to="#ea5b37" />
    <circle cx="36" cy="36" r="31.500" fill="url(#pm)" stroke="#fbf1ea" strokeWidth="2" />
    <path d="M47 25l4 4-17 20-16 6 9-11 3-1-1-4z" fill="#fff" />
    <path d="M46 30L28 44" stroke="#ec7a48" strokeWidth="1.500" />
    <circle cx="51.500" cy="20.500" r="5.500" fill="#fff" />
    <path d="M51 20l4-2" stroke="#ec7a48" strokeWidth="1.500" />
  </Board>
);

const Terminal = () => (
  <Board>
    <rect x="4.500" y="8.500" width="63" height="55" rx="3" fill="#050505" stroke="#8e9499" strokeWidth="1.500" />
    <path d="M9 13h54v46H9z" fill="#242424" />
    <text x="11" y="28" fontFamily={`"DejaVu Sans Mono", monospace`} fontWeight="700" fontSize="17" fill="#fff">
      &gt;_
    </text>
  </Board>
);

const Zalo = () => (
  <Svg w={74} h={72} box="-1 0 74 72">
    <path d="M22 0C5 4-1 14-1 32c0 28 8 41 36 41 18 0 28-4 33-12z" fill="#1f66ee" />
    <path d="M40-1c24 0 33 8 33 33 0 26-9 34-33 34-9 0-15-1-20-4-3 2-6 3-11 3 3-3 3-6 2-8C6 51 5 43 5 32 5 7 15-1 40-1z" fill="#fff" />
    <text x="39" y="42" fontFamily={UI} fontWeight="700" fontSize="25" textAnchor="middle" fill="#2468f2">
      Zalo
    </text>
  </Svg>
);

const Receipt = () => (
  <Board>
    <path d="M21 1h30v8H21z" fill="#dcdcdc" />
    <path d="M17 8h38v62H17z" fill="#fbfbfb" />
    <path d="M20 5h32M20 12h32M25 17h22M29 20h14M20 33h9M42 33h10M20 43h11M44 43h8M20 56h8M30 56h10M20 60h8M30 60h12" stroke="#b3b3b3" strokeWidth="1.300" />
    <path d="M31 26h10M30 66h14" stroke="#9ad6d2" strokeWidth="2" />
    <path d="M20 38h12M46 38h6" stroke="#f1b58a" strokeWidth="1.500" />
  </Board>
);

const Trash = () => (
  <Board>
    <linearGradient id="tr" x1="0" y1="0" x2="1" y2="0">
      <stop offset="0" stopColor="#3c3e41" />
      <stop offset=".45" stopColor="#8b8d90" />
      <stop offset="1" stopColor="#3f4144" />
    </linearGradient>
    <path d="M12 12l5-8 8 3 8-6 9 3 8-2 10 9-6 9H16z" fill="#e9eaec" />
    <path d="M22 8l8 10M38 5l-3 13M48 6l6 10" stroke="#3b3d40" strokeWidth="2" />
    <path d="M30 10h7v5h-7z" fill="#58b8dd" />
    <path d="M44 11h6v5h-6z" fill="#e2683a" />
    <path d="M10 12c8 8 44 8 52 0l-7 52c-2 7-36 7-38 0z" fill="url(#tr)" />
    <path d="M10 12c8 8 44 8 52 0" stroke="#a9abae" strokeWidth="1.500" />
    <path d="M32 26c8-2 14 0 10 5M27 40c4 6 8 8 14 9" stroke="#b4b6b9" strokeWidth="2" opacity=".5" />
  </Board>
);

/* ---------- data ---------- */

const menus = ["File", "Edit", "View", "History", "Bookmarks", "People", "Tab", "Window", "Help"];

const tabs = [
  { title: "BigQuery – BA", icon: BigQueryIcon },
  { title: "BigQuery – BA", icon: BigQueryIcon },
  { title: "datacourse/", icon: JupyterIcon },
  { title: "WQU-Unit-1/W", icon: GithubIcon },
  { title: "JupyterHub", icon: JupyterIcon },
  { title: "WQU-DS-1/vo", icon: GithubIcon },
  { title: "Data-Science", icon: GithubIcon },
  { title: "Download", icon: MusicIcon, audio: true },
  { title: "Kubernetes co", icon: CourseraIcon, active: true },
];

const questions = [
  {
    text: "True or false: if one of your GKE clusters' TLS certificates are compromised, you must replace the certificates on all your GKE clusters.",
    options: ["True", "False"],
  },
  {
    text: "It's a good security practice to rotate your GKE cluster credentials frequently, to limit the value of any compromised keys. What is the tradeoff inherent in rotating your cluster credentials?",
    options: [
      "Your cluster must be restarted whenever credentials are rotated.",
      "GCP charges a fee per credentials rotation.",
      "During the rotation, your cluster's API endpoint is unavailable for a short while.",
      'Whenever you rotate your cluster credentials, you must also rotate your cluster database ("etcd") certificates.',
    ],
  },
];

const downloads = ["index.mp4", "subtitle.txt", "index.mp4", "subtitle.txt", "index.mp4"];

const apps = [
  { name: "Finder", icon: Finder, running: true },
  { name: "Launchpad", icon: Launchpad },
  { name: "Safari", icon: Safari },
  { name: "Contacts", icon: Contacts },
  { name: "Calendar", icon: Calendar, running: true },
  { name: "Notes", icon: Notes },
  { name: "Reminders", icon: Reminders, running: true },
  { name: "Maps", icon: Maps },
  { name: "Photos", icon: Photos },
  { name: "Messages", icon: Messages },
  { name: "FaceTime", icon: FaceTime, badge: "4" },
  { name: "Pages", icon: Pages },
  { name: "Keynote", icon: Keynote },
  { name: "iTunes", icon: ITunes, running: true },
  { name: "App Store", icon: AppStore, badge: "6" },
  { name: "System Preferences", icon: Settings, running: true, badge: "1" },
  { name: "Chrome", icon: Chrome, running: true },
  { name: "Skype", icon: Skype },
  { name: "LINE", icon: Line, running: true },
  { name: "Tortoise", icon: Tortoise, running: true },
  { name: "Sublime Text", icon: Sublime, running: true },
  { name: "Slack", icon: Slack, running: true, badge: "•" },
  { name: "GitHub Desktop", icon: GithubApp, running: true },
];

const tools = [
  { name: "Anaconda", icon: Anaconda, running: true },
  { name: "Excel", icon: Excel, running: true },
  { name: "Postman", icon: Postman, running: true },
  { name: "Terminal", icon: Terminal, running: true },
  { name: "Zalo", icon: Zalo, running: true },
];

const stacks = [
  { name: "Documents", icon: Receipt },
  { name: "Trash", icon: Trash },
];

const DockApps = ({ items }) =>
  items.map(({ name, icon: Icon, running, badge }) => (
    <Slot key={name} aria-label={name}>
      <Icon />
      {running && <Running />}
      {badge && <Badge>{badge}</Badge>}
    </Slot>
  ));

export default function App() {
  return (
    <Desktop>
      <GlobalStyle />
      <MenuBar>
        <MenuGroup>
          <FaApple size={32} />
          <MenuButton $bold>Chrome</MenuButton>
          {menus.map((m) => (
            <MenuButton key={m}>{m}</MenuButton>
          ))}
        </MenuGroup>
        <StatusGroup $gap={36}>
          <StatusGroup $gap={26}>
            <StatusGroup $gap={28}>
              <LineStatus />
              <FaDocker size={36} />
              <Bluetooth />
              <Wifi />
            </StatusGroup>
            <Battery />
            <InputSource>
              <Faded>VI</Faded>
              VNI
            </InputSource>
          </StatusGroup>
          <MenuButton>Fri 2:50 PM</MenuButton>
          <StatusGroup $gap={32}>
            <MenuButton>Linh Trinh</MenuButton>
            <Spotlight />
          </StatusGroup>
          <StatusGroup $gap={24}>
            <Siri />
            <ListIcon />
          </StatusGroup>
        </StatusGroup>
      </MenuBar>

      <Window>
        <TabStrip>
          <TrafficLights>
            <Light $color="#ec6559" aria-label="Close window" />
            <Light $color="#e0bf4c" aria-label="Minimize window" />
            <Light $color="#72be47" aria-label="Zoom window" />
          </TrafficLights>
          <TabList>
            {tabs.map(({ title, icon: Icon, active, audio }, i) => (
              <TabBox key={i} $active={active} $divided={i < 7}>
                <Icon />
                <TabTitle>{title}</TabTitle>
                {audio && <Speaker />}
                <IconButton $w={18} aria-label="Close tab">
                  <Cross />
                </IconButton>
              </TabBox>
            ))}
          </TabList>
          <NewTab aria-label="New tab">
            <Svg w={24} stroke="currentColor" strokeWidth="3.600">
              <path d="M12 0v24M0 12h24" />
            </Svg>
          </NewTab>
        </TabStrip>

        <Toolbar>
          <NavButtons>
            <IconButton $w={32} aria-label="Back">
              <Arrow color="#f1f3f4" />
            </IconButton>
            <IconButton $w={32} aria-label="Forward">
              <Arrow flip color="#85868a" />
            </IconButton>
            <IconButton $w={32} aria-label="Reload">
              <Reload />
            </IconButton>
          </NavButtons>
          <Omnibox>
            <Lock />
            <Address
              aria-label="Address"
              defaultValue="coursera.org/learn/deploying-secure-kubernetes-containers-in-production/quiz/lTyhS/kubernetes-control-plane-security/attempt"
            />
            <Star />
          </Omnibox>
          <Extensions $gap={32} $lead={26}>
            <Translate />
            <Grammarly />
          </Extensions>
          <Extensions $gap={26} $lead={28}>
            <Rule />
            <Playlist />
            <Avatar>Y</Avatar>
            <Update />
          </Extensions>
        </Toolbar>

        <Viewport>
          <PageHeader>
            <BackButton aria-label="Back">
              <BackArrow />
            </BackButton>
            <HeaderText>
              <HeaderTitle>Kubernetes control plane security</HeaderTitle>
              <HeaderMeta>Practice Quiz • 30 min</HeaderMeta>
            </HeaderText>
          </PageHeader>
          <PageBody>
            <Quiz>
              <Title>Kubernetes control plane security</Title>
              <Points>TOTAL POINTS 2</Points>
              <Questions>
                {questions.map((q, i) => (
                  <Question key={i}>
                    <span>{i + 1}.</span>
                    <QuestionBody>
                      <Prompt>{q.text}</Prompt>
                      <Options>
                        {q.options.map((o) => (
                          <Option key={o}>
                            <Radio type="radio" name={`question-${i}`} />
                            <span>{o}</span>
                          </Option>
                        ))}
                      </Options>
                    </QuestionBody>
                    <Pill>1 point</Pill>
                  </Question>
                ))}
              </Questions>
              <Honor>
                <Agreement>
                  <Checkbox type="checkbox" />
                  <span>I understand that submitting work that isn’t my own may result in permanent failure of this course or</span>
                </Agreement>
                <Feedback>
                  <button aria-label="Like">
                    <ThumbUp />
                  </button>
                  <button aria-label="Dislike">
                    <ThumbDown />
                  </button>
                  <button aria-label="Report">
                    <Flag />
                  </button>
                </Feedback>
              </Honor>
            </Quiz>
          </PageBody>
        </Viewport>

        <Shelf>
          {downloads.map((name, i) => (
            <Download key={i}>
              {name.endsWith("mp4") ? <MovieFile /> : <TextFile />}
              <FileName>{name}</FileName>
              <IconButton $w={20} aria-label={`Options for ${name}`}>
                <Chevron />
              </IconButton>
            </Download>
          ))}
          <ShelfActions>
            <ShowAll>Show All</ShowAll>
            <IconButton $w={20} aria-label="Close downloads">
              <Cross size={20} />
            </IconButton>
          </ShelfActions>
        </Shelf>
      </Window>

      <Dock>
        <DockApps items={apps} />
        <DockRule $h={48} />
        <DockApps items={tools} />
        <DockRule $h={72} />
        <DockApps items={stacks} />
      </Dock>
    </Desktop>
  );
}
